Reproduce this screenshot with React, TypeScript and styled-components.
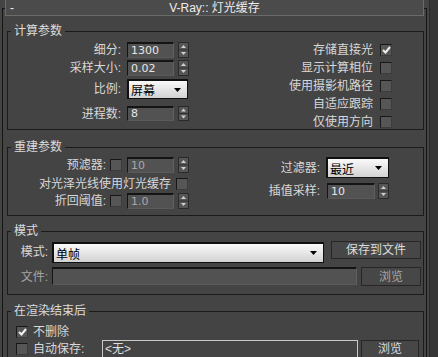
import React from 'react'
import styled, { createGlobalStyle } from 'styled-components'

const GlobalStyle = createGlobalStyle`
  html, body {
    margin: 0;
    padding: 0;
    background: #444444;
    overflow: hidden;
  }
  body {
    font-family: "Liberation Sans", "Noto Sans CJK SC", sans-serif;
    font-size: 12px;
    color: #dadada;
  }
`

const Page = styled.div`
  display: flex;
  height: 357px;
  padding-left: 2px;
`

const Rollout = styled.div`
  box-sizing: border-box;
  width: 427px;
  margin-top: 8px;
  padding: 0 2px;
  border: 1px solid #151515;
  border-bottom: none;
`

const ScrollTrack = styled.div`
  width: 8px;
  margin-left: 2px;
  background: #363636;
  border-left: 1px solid #2a2a2a;
`

const TitleBar = styled.div`
  box-sizing: border-box;
  display: grid;
  grid-template-columns: 1fr auto 1fr;
  align-items: center;
  height: 17px;
  margin-top: -10px;
  padding: 0 4px;
  border: 1px solid #6b6b6b;
  background: #4b4b4b;
  color: #ededed;
  line-height: 14px;
`

const Minus = styled.span`
  font-size: 12px;
`

const Group = styled.fieldset<{ $top: number }>`
  margin: ${p => p.$top}px 0 0 2px;
  padding: 0;
  border: 1px solid #1b1b1b;
  min-width: 0;
`

const Legend = styled.legend`
  margin-left: 3px;
  padding: 0 3px;
  line-height: 14px;
  color: #dcdcdc;
`

const Body = styled.div<{ $h: number }>`
  display: flex;
  height: ${p => p.$h}px;
`

const Col = styled.div<{ $w?: number; $pl?: number }>`
  display: flex;
  flex-direction: column;
  ${p => (p.$w ? `width: ${p.$w}px; flex: none;` : 'flex: 1;')}
  padding-left: ${p => p.$pl ?? 0}px;
`

const Row = styled.div<{ $top: number; $h: number; $start?: boolean }>`
  display: flex;
  align-items: ${p => (p.$start ? 'flex-start' : 'center')};
  height: ${p => p.$h}px;
  margin-top: ${p => p.$top}px;
  flex: none;
`

const Label = styled.span<{ $w?: number; $dim?: boolean; $left?: boolean; $ml?: number; $top?: boolean }>`
  ${p => (p.$w ? `width: ${p.$w}px;` : '')}
  flex: none;
  margin-left: ${p => p.$ml ?? 0}px;
  text-align: ${p => (p.$left ? 'left' : 'right')};
  white-space: nowrap;
  line-height: 14px;
  color: ${p => (p.$dim ? '#a4a4a4' : '#d8d8d8')};
  align-self: ${p => (p.$top ? 'flex-start' : 'center')};
  ${p => (p.$top ? 'margin-top: 2px;' : '')}
`

const Field = styled.div<{ $w: number; $ml: number; $dim?: boolean; $h?: number }>`
  box-sizing: border-box;
  width: ${p => p.$w}px;
  height: ${p => (p.$h ? `${p.$h}px` : '100%')};
  margin-left: ${p => p.$ml}px;
  flex: none;
  padding: 0 3px;
  background: #525252;
  border: 1px solid;
  border-top-width: 2px;
  border-color: #141414 #606060 #5a5a5a #141414;
  color: ${p => (p.$dim ? '#a8a8a8' : '#e6e6e6')};
  line-height: 12px;
  font-family: "DejaVu Sans", "Liberation Sans", sans-serif;
  font-size: 11px;
  display: flex;
  align-items: center;
`

const Drop = styled.div<{ $w: number; $ml: number; $h: number; $mt?: number }>`
  box-sizing: border-box;
  width: ${p => p.$w}px;
  height: ${p => p.$h}px;
  margin-left: ${p => p.$ml}px;
  margin-top: ${p => p.$mt ?? 0}px;
  flex: none;
  display: flex;
  align-items: center;
  justify-content: space-between;
  padding: 0 6px 0 2px;
  background: linear-gradient(#fafafa, #d2d2d2);
  border: 1px solid #101010;
  border-top-width: 2px;
  border-left-width: 2px;
  color: #000;
  font-size: 12px;
`

const Button = styled.div<{ $w: number; $ml: number; $h: number; $dim?: boolean; $top?: boolean }>`
  box-sizing: border-box;
  width: ${p => p.$w}px;
  height: ${p => p.$h}px;
  margin-left: ${p => p.$ml}px;
  flex: none;
  display: flex;
  align-items: ${p => (p.$top ? 'flex-start' : 'center')};
  justify-content: center;
  padding-top: ${p => (p.$top ? 1 : 0)}px;
  background: #474747;
  border: 1px solid #262626;
  color: ${p => (p.$dim ? '#a6a6a6' : '#dcdcdc')};
  font-size: 12px;
  line-height: 14px;
`

const Box = styled.div<{ $ml: number; $mt?: number }>`
  box-sizing: border-box;
  width: 12px;
  height: 12px;
  margin-left: ${p => p.$ml}px;
  margin-top: ${p => p.$mt ?? 0}px;
  flex: none;
  background: #565656;
  border: 1px solid;
  border-color: #181818 #3c3c3c #3c3c3c #181818;
  display: flex;
  align-items: center;
  justify-content: center;
`

const PathBox = styled.div`
  box-sizing: border-box;
  width: 256px;
  height: 40px;
  margin-left: 9px;
  flex: none;
  padding: 1px 2px;
  border: 1px solid #c9c9c9;
  color: #dedede;
  line-height: 14px;
`

const Icon = styled.svg<{ $ml?: number }>`
  display: block;
  flex: none;
  margin-left: ${p => p.$ml ?? 0}px;
`

const Spinner = ({ ml, h = 16 }: { ml: number; h?: number }) => (
  <Icon $ml={ml} width={11} height={h} viewBox={`0 0 11 ${h}`}>
    <rect x={0.5} y={0.5} width={10} height={h - 1} fill="#565656" stroke="#2a2a2a" />
    <line x1={1} y1={h / 2} x2={10} y2={h / 2} stroke="#2e2e2e" />
    <path d={`M3 ${h / 2 - 2} L5.5 ${h / 2 - 5} L8 ${h / 2 - 2}Z`} fill="#d0d0d0" />
    <path d={`M3 ${h / 2 + 2} L8 ${h / 2 + 2} L5.5 ${h / 2 + 5}Z`} fill="#d0d0d0" />
  </Icon>
)

const Arrow = () => (
  <Icon width={7} height={4} viewBox="0 0 7 4">
    <path d="M0 0 L7 0 L3.5 4Z" fill="#000" />
  </Icon>
)

const Check = ({ ml, on, mt }: { ml: number; on?: boolean; mt?: number }) => (
  <Box $ml={ml} $mt={mt}>
    {on && (
      <Icon width={9} height={8} viewBox="0 0 9 8">
        <path d="M1 4 L3.5 6.5 L8 1" fill="none" stroke="#f0f0f0" strokeWidth={2} />
      </Icon>
    )}
  </Box>
)

const CheckRow = ({ label, on }: { label: string; on?: boolean }) => (
  <Row $top={0} $h={18}>
    <Label $w={173}>{label}</Label>
    <Check ml={7} on={on} />
  </Row>
)

const App = () => {
  return (
    <>
      <GlobalStyle />
      <Page>
        <Rollout>
          <TitleBar>
            <Minus>-</Minus>
            <span>V-Ray:: 灯光缓存</span>
            <span />
          </TitleBar>

          <Group $top={8}>
            <Legend>计算参数</Legend>
            <Body $h={91}>
              <Col $w={192}>
                <Row $top={4} $h={16}>
                  <Label $w={113}>细分:</Label>
                  <Field $w={47} $ml={6}>1300</Field>
                  <Spinner ml={4} />
                </Row>
                <Row $top={2} $h={16}>
                  <Label $w={113}>采样大小:</Label>
                  <Field $w={47} $ml={6}>0.02</Field>
                  <Spinner ml={4} />
                </Row>
                <Row $top={3} $h={20}>
                  <Label $w={113}>比例:</Label>
                  <Drop $w={61} $ml={6} $h={20}>
                    屏幕
                    <Arrow />
                  </Drop>
                </Row>
                <Row $top={7} $h={15}>
                  <Label $w={113}>进程数:</Label>
                  <Field $w={47} $ml={6}>8</Field>
                  <Spinner ml={4} h={15} />
                </Row>
              </Col>
              <Col>
                <Row $top={0} $h={3} />
                <CheckRow label="存储直接光" on />
                <CheckRow label="显示计算相位" />
                <CheckRow label="使用摄影机路径" />
                <CheckRow label="自适应跟踪" />
                <CheckRow label="仅使用方向" />
              </Col>
            </Body>
          </Group>

          <Group $top={10}>
            <Legend>重建参数</Legend>
            <Body $h={61}>
              <Col $w={192}>
                <Row $top={3} $h={16}>
                  <Label $w={98}>预滤器:</Label>
                  <Check ml={4} />
                  <Field $w={47} $ml={5} $dim>10</Field>
                  <Spinner ml={4} />
                </Row>
                <Row $top={5} $h={12}>
                  <Label $w={163}>对光泽光线使用灯光缓存</Label>
                  <Check ml={5} />
                </Row>
                <Row $top={3} $h={16}>
                  <Label $w={98}>折回阈值:</Label>
                  <Check ml={4} />
                  <Field $w={47} $ml={5} $dim>1.0</Field>
                  <Spinner ml={4} />
                </Row>
              </Col>
              <Col>
                <Row $top={3} $h={21}>
                  <Label $w={120}>过滤器:</Label>
                  <Drop $w={63} $ml={6} $h={21}>
                    最近
                    <Arrow />
                  </Drop>
                </Row>
                <Row $top={5} $h={16}>
                  <Label $w={120}>插值采样:</Label>
                  <Field $w={48} $ml={7}>10</Field>
                  <Spinner ml={3} />
                </Row>
              </Col>
            </Body>
          </Group>

          <Group $top={8}>
            <Legend>模式</Legend>
            <Body $h={56}>
              <Col>
                <Row $top={3} $h={21} $start>
                  <Label $w={40}>模式:</Label>
                  <Drop $w={272} $ml={4} $h={21} $mt={1}>
                    单帧
                    <Arrow />
                  </Drop>
                  <Button $w={90} $ml={7} $h={18}>保存到文件</Button>
                </Row>
                <Row $top={5} $h={19} $start>
                  <Label $w={40} $dim>文件:</Label>
                  <Field $w={305} $ml={4} $h={18} />
                  <Button $w={60} $ml={4} $h={19} $dim>浏览</Button>
                </Row>
              </Col>
            </Body>
          </Group>

          <Group $top={9}>
            <Legend>在渲染结束后</Legend>
            <Body $h={60}>
              <Col $pl={8}>
                <Row $top={8} $h={12}>
                  <Check ml={0} on />
                  <Label $left $ml={5}>不删除</Label>
                </Row>
                <Row $top={2} $h={40} $start>
                  <Check ml={0} mt={3} />
                  <Label $w={60} $left $ml={5} $top>自动保存:</Label>
                  <PathBox>&lt;无&gt;</PathBox>
                  <Button $w={58} $ml={3} $h={40} $top>浏览</Button>
                </Row>
              </Col>
            </Body>
          </Group>
        </Rollout>
        <ScrollTrack />
      </Page>
    </>
  )
}

export default App
